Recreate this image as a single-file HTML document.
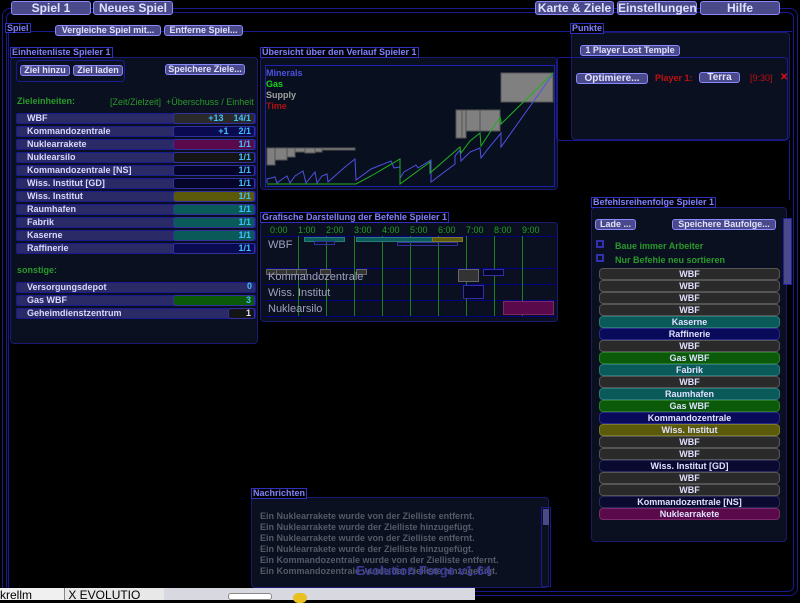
<!DOCTYPE html>
<html><head><meta charset="utf-8"><style>
*{margin:0;padding:0;box-sizing:border-box}
body{width:800px;height:600px;background:#000;position:relative;overflow:hidden;font-family:"Liberation Sans",sans-serif;font-weight:bold;font-size:9px;color:#d0d0ff}
.a{position:absolute}
.tab{position:absolute;height:14px;background:#4a4a8a;border:1px solid #8888ff;border-radius:3px;color:#e0e0ff;font-size:12px;text-align:center;line-height:12px}
.btn{position:absolute;height:11px;background:#4a4a8a;border:1px solid #8888ff;border-radius:3px;color:#e0e0ff;font-size:9px;text-align:center;line-height:9px;white-space:nowrap}
.lbl{position:absolute;height:11px;border:1px solid #3030c0;color:#8080ff;font-size:9px;line-height:9px;padding:0 1px;background:#000;white-space:nowrap}
.pan{position:absolute;background:#0a1020;border:1px solid #1a1a70;border-radius:4px}
.row{position:absolute;left:16px;width:240px;height:11px;background:#2a2a66;border:1px solid #1a1a90;border-radius:2px;font-size:9px;line-height:9px;padding-left:10px;color:#d8d8ff}
.v{position:absolute;right:0;top:-1px;height:11px;width:82px;border:1px solid #3030a0;border-radius:3px;text-align:right;padding-right:3px;color:#40c0ff;line-height:9px}
.it{position:absolute;left:599px;width:181px;height:12px;border:1px solid #555;border-radius:4px;text-align:center;font-size:9px;line-height:10px;color:#e0e0ff}
.g{background:#2a2a2a}.t{background:#0a5a5a;border-color:#2a7a7a}.n{background:#0a0a5a;border-color:#2a2a8a}.gr{background:#0a5a0a;border-color:#2a7a2a}.o{background:#5a5a0a;border-color:#7a7a2a}.d{background:#0a0a30;border-color:#2a2a5a}.p{background:#5a0a4a;border-color:#7a2a6a}
.msg{position:absolute;left:260px;color:#555a66;font-size:9px}
.tm{position:absolute;top:225px;color:#20a020;font-weight:normal;font-size:9px}
</style></head><body>
<div class="a" style="left:2px;top:8px;width:796px;height:588px;border:1px solid #1a1a90;border-radius:8px"></div>
<div class="a" style="left:6px;top:12px;width:788px;height:580px;border:1px solid #1a1a90;border-radius:6px"></div>
<div class="a" style="left:8px;top:31px;width:784px;height:560px;border-left:1px solid #1a1a90;border-top:1px solid #1a1a90"></div>
<div class="tab" style="left:11px;top:1px;width:80px">Spiel 1</div>
<div class="tab" style="left:93px;top:1px;width:80px">Neues Spiel</div>
<div class="tab" style="left:535px;top:1px;width:79px">Karte &amp; Ziele</div>
<div class="tab" style="left:617px;top:1px;width:80px">Einstellungen</div>
<div class="tab" style="left:700px;top:1px;width:80px">Hilfe</div>
<div class="lbl" style="left:5px;top:23px;height:10px">Spiel</div>
<div class="btn" style="left:55px;top:25px;width:106px">Vergleiche Spiel mit...</div>
<div class="btn" style="left:164px;top:25px;width:79px">Entferne Spiel...</div>

<div class="pan" style="left:10px;top:57px;width:248px;height:287px"></div>
<div class="lbl" style="left:10px;top:47px">Einheitenliste Spieler 1</div>
<div class="a" style="left:16px;top:60px;width:109px;height:22px;border:1px solid #1a1a90;border-radius:4px"></div>
<div class="btn" style="left:20px;top:65px;width:50px">Ziel hinzu</div>
<div class="btn" style="left:73px;top:65px;width:50px">Ziel laden</div>
<div class="btn" style="left:165px;top:64px;width:80px">Speichere Ziele...</div>
<div class="a" style="left:17px;top:96px;color:#2a9a2a">Zieleinheiten:</div>
<div class="a" style="left:110px;top:97px;color:#2a9a2a;font-weight:normal;width:148px;overflow:hidden;white-space:nowrap">[Zeit/Zielzeit]&nbsp; +Überschuss / Einheit</div>
<div class="row" style="top:113px">WBF<div class="v" style="background:#2a2a2a">+13 &nbsp;&nbsp; 14/1</div></div>
<div class="row" style="top:126px">Kommandozentrale<div class="v" style="background:#0a0a50">+1 &nbsp;&nbsp; 2/1</div></div>
<div class="row" style="top:139px">Nuklearrakete<div class="v" style="background:#5a0a4a">1/1</div></div>
<div class="row" style="top:152px">Nuklearsilo<div class="v" style="background:#151515">1/1</div></div>
<div class="row" style="top:165px">Kommandozentrale [NS]<div class="v" style="background:#05052a">1/1</div></div>
<div class="row" style="top:178px">Wiss. Institut [GD]<div class="v" style="background:#05052a">1/1</div></div>
<div class="row" style="top:191px">Wiss. Institut<div class="v" style="background:#5a5a0a">1/1</div></div>
<div class="row" style="top:204px">Raumhafen<div class="v" style="background:#0a5a5a">1/1</div></div>
<div class="row" style="top:217px">Fabrik<div class="v" style="background:#0a5a5a">1/1</div></div>
<div class="row" style="top:230px">Kaserne<div class="v" style="background:#0a5a5a">1/1</div></div>
<div class="row" style="top:243px">Raffinerie<div class="v" style="background:#0a0a50">1/1</div></div>
<div class="a" style="left:17px;top:265px;color:#2a9a2a">sonstige:</div>
<div class="row" style="top:282px">Versorgungsdepot<div class="v" style="border:none;background:none">0</div></div>
<div class="row" style="top:295px">Gas WBF<div class="v" style="background:#0a5a0a">3</div></div>
<div class="row" style="top:308px">Geheimdienstzentrum<div class="v" style="background:#151515;width:27px;color:#e0e0ff">1</div></div>

<div class="pan" style="left:260px;top:57px;width:298px;height:133px"></div>
<div class="lbl" style="left:260px;top:47px">Übersicht über den Verlauf Spieler 1</div>
<svg class="a" style="left:0;top:0" width="800" height="600" viewBox="0 0 800 600">
<rect x="265.5" y="65.5" width="289" height="121" fill="#081020" stroke="#2020b0"/>
<g fill="#808080" stroke="#555">
<rect x="267" y="148" width="8" height="17"/><rect x="275" y="148" width="12" height="12"/><rect x="287" y="148" width="8" height="9"/><rect x="295" y="148" width="10" height="4"/><rect x="305" y="148" width="10" height="5"/><rect x="315" y="148" width="7" height="4"/><rect x="322" y="148" width="33" height="2"/>
<rect x="456" y="110" width="6" height="28"/><rect x="462" y="110" width="4" height="28"/><rect x="466" y="110" width="14" height="21"/><rect x="480" y="110" width="20" height="21"/><rect x="501" y="73" width="52" height="29"/></g>
<polyline fill="none" stroke="#5050e0" stroke-width="1" points="267,183 267,179 275,177 277,183 281,180 287,176 290,183 295,176 303,171 306,183 310,178 315,172 317,183 322,176 327,174 328,182 345,167 355,159 356,180 371,169 391,161 394,168 400,167 400,178 404,172 416,165 418,168 431,160 431,182 455,164 455,156 460,150 461,161 470,152 480,148 481,158 487,150 501,133 501,147 553,74"/>
<polyline fill="none" stroke="#20b020" stroke-width="1" points="267,184 328,184 345,184 356,184 371,176 400,159 400,184 430,162 430,173 460,147 461,153 470,141 480,133 481,146 500,117 501,121 501,124 553,73"/>
</svg>
<div class="a" style="left:266px;top:68px;color:#5050e0">Minerals</div>
<div class="a" style="left:266px;top:79px;color:#20d020">Gas</div>
<div class="a" style="left:266px;top:90px;color:#a0a0a0">Supply</div>
<div class="a" style="left:266px;top:101px;color:#b01010">Time</div>

<div class="pan" style="left:571px;top:32px;width:219px;height:108px"></div>
<div class="lbl" style="left:570px;top:23px">Punkte</div>
<div class="btn" style="left:580px;top:45px;width:100px">1 Player Lost Temple</div>
<div class="a" style="left:556px;top:57px;width:232px;height:84px;border:1px solid #1a1a90;border-radius:4px"></div>
<div class="btn" style="left:576px;top:73px;width:72px;font-size:10px">Optimiere...</div>
<div class="a" style="left:655px;top:73px;color:#c01010">Player 1:</div>
<div class="btn" style="left:699px;top:72px;width:41px;font-size:10px">Terra</div>
<div class="a" style="left:750px;top:73px;color:#c01010;font-weight:normal">[9:30]</div>
<div class="a" style="left:780px;top:72px;color:#e01010;font-size:10px">✕</div>

<div class="pan" style="left:260px;top:222px;width:298px;height:100px"></div>
<div class="lbl" style="left:260px;top:212px">Grafische Darstellung der Befehle Spieler 1</div>
<svg class="a" style="left:0;top:0" width="800" height="600">
<g stroke="#000080"><line x1="265" y1="236.5" x2="556" y2="236.5"/><line x1="265" y1="268.5" x2="556" y2="268.5"/><line x1="265" y1="284.5" x2="556" y2="284.5"/><line x1="265" y1="300.5" x2="556" y2="300.5"/><line x1="265" y1="316.5" x2="556" y2="316.5"/></g>
<g stroke="#208020"><line x1="298.5" y1="236" x2="298.5" y2="316"/><line x1="326.5" y1="236" x2="326.5" y2="316"/><line x1="354.5" y1="236" x2="354.5" y2="316"/><line x1="382.5" y1="236" x2="382.5" y2="316"/><line x1="410.5" y1="236" x2="410.5" y2="316"/><line x1="438.5" y1="236" x2="438.5" y2="316"/><line x1="466.5" y1="236" x2="466.5" y2="316"/><line x1="494.5" y1="236" x2="494.5" y2="316"/><line x1="522.5" y1="236" x2="522.5" y2="316"/></g>
<rect x="304.5" y="237.5" width="40" height="4" fill="#0a5a5a" stroke="#2a7a7a"/>
<rect x="356.5" y="237.5" width="76" height="4" fill="#0a5a5a" stroke="#2a7a7a"/>
<rect x="432.5" y="237.5" width="30" height="4" fill="#5a5a0a" stroke="#7a7a2a"/>
<rect x="314.5" y="241.5" width="20" height="3" fill="none" stroke="#3030a0"/>
<rect x="397.5" y="242.5" width="60" height="3" fill="none" stroke="#3030a0"/>
<g fill="#333" stroke="#666"><rect x="266.5" y="269.5" width="10" height="5"/><rect x="276.5" y="269.5" width="10" height="5"/><rect x="286.5" y="269.5" width="10" height="5"/><rect x="296.5" y="269.5" width="10" height="5"/><rect x="320.5" y="269.5" width="10" height="5"/><rect x="356.5" y="269.5" width="10" height="5"/><rect x="458.5" y="269.5" width="20" height="12"/></g>
<rect x="483.5" y="269.5" width="20" height="6" fill="#05052a" stroke="#3030a0"/>
<rect x="463.5" y="285.5" width="20" height="13" fill="#05052a" stroke="#3030a0"/>
<rect x="503.5" y="301.5" width="50" height="13" fill="#5a0a4a" stroke="#7a2a6a"/>
</svg>
<div class="tm" style="left:270px">0:00</div>
<div class="tm" style="left:298px">1:00</div>
<div class="tm" style="left:326px">2:00</div>
<div class="tm" style="left:354px">3:00</div>
<div class="tm" style="left:382px">4:00</div>
<div class="tm" style="left:410px">5:00</div>
<div class="tm" style="left:438px">6:00</div>
<div class="tm" style="left:466px">7:00</div>
<div class="tm" style="left:494px">8:00</div>
<div class="tm" style="left:522px">9:00</div>
<div class="a" style="left:268px;top:239px;color:#a0a0c0;font-weight:normal;font-size:11px">WBF</div>
<div class="a" style="left:268px;top:271px;color:#a0a0c0;font-weight:normal;font-size:11px">Kommandozentrale</div>
<div class="a" style="left:268px;top:287px;color:#a0a0c0;font-weight:normal;font-size:11px">Wiss. Institut</div>
<div class="a" style="left:268px;top:303px;color:#a0a0c0;font-weight:normal;font-size:11px">Nuklearsilo</div>

<div class="a" style="left:570px;top:140px;width:220px;height:60px;border-right:1px solid #1a1a90"></div>
<div class="pan" style="left:591px;top:207px;width:196px;height:335px"></div>
<div class="lbl" style="left:591px;top:197px">Befehlsreihenfolge Spieler 1</div>
<div class="btn" style="left:595px;top:219px;width:41px">Lade ...</div>
<div class="btn" style="left:672px;top:219px;width:104px">Speichere Baufolge...</div>
<div class="a" style="left:783px;top:218px;width:9px;height:67px;background:#4a4a8a;border:1px solid #2020a0"></div>
<div class="a" style="left:596px;top:240px;width:8px;height:8px;border:2px solid #3030b0"></div>
<div class="a" style="left:596px;top:254px;width:8px;height:8px;border:2px solid #3030b0"></div>
<div class="a" style="left:615px;top:241px;color:#2a9a2a">Baue immer Arbeiter</div>
<div class="a" style="left:615px;top:255px;color:#2a9a2a">Nur Befehle neu sortieren</div>
<div class="it g" style="top:268px">WBF</div>
<div class="it g" style="top:280px">WBF</div>
<div class="it g" style="top:292px">WBF</div>
<div class="it g" style="top:304px">WBF</div>
<div class="it t" style="top:316px">Kaserne</div>
<div class="it n" style="top:328px">Raffinerie</div>
<div class="it g" style="top:340px">WBF</div>
<div class="it gr" style="top:352px">Gas WBF</div>
<div class="it t" style="top:364px">Fabrik</div>
<div class="it g" style="top:376px">WBF</div>
<div class="it t" style="top:388px">Raumhafen</div>
<div class="it gr" style="top:400px">Gas WBF</div>
<div class="it n" style="top:412px">Kommandozentrale</div>
<div class="it o" style="top:424px">Wiss. Institut</div>
<div class="it g" style="top:436px">WBF</div>
<div class="it g" style="top:448px">WBF</div>
<div class="it d" style="top:460px">Wiss. Institut [GD]</div>
<div class="it g" style="top:472px">WBF</div>
<div class="it g" style="top:484px">WBF</div>
<div class="it d" style="top:496px">Kommandozentrale [NS]</div>
<div class="it p" style="top:508px">Nuklearrakete</div>

<div class="pan" style="left:251px;top:497px;width:298px;height:91px"></div>
<div class="lbl" style="left:251px;top:488px">Nachrichten</div>
<div class="a" style="left:543px;top:509px;width:6px;height:16px;background:#4a4a8a"></div>
<div class="a" style="left:541px;top:507px;width:10px;height:80px;border:1px solid #1a1a90"></div>
<div class="msg" style="top:511px">Ein Nuklearrakete wurde von der Zielliste entfernt.</div>
<div class="msg" style="top:522px">Ein Nuklearrakete wurde der Zielliste hinzugefügt.</div>
<div class="msg" style="top:533px">Ein Nuklearrakete wurde von der Zielliste entfernt.</div>
<div class="msg" style="top:544px">Ein Nuklearrakete wurde der Zielliste hinzugefügt.</div>
<div class="msg" style="top:555px">Ein Kommandozentrale wurde von der Zielliste entfernt.</div>
<div class="msg" style="top:566px">Ein Kommandozentrale wurde der Zielliste hinzugefügt.</div>
<div class="a" style="left:356px;top:563px;color:#3a3a9a;font-size:13px">Evolution Forge v1.64</div>

<div class="a" style="left:0;top:588px;width:475px;height:12px;background:#d8d8e0"></div>
<div class="a" style="left:0;top:588px;width:64px;height:12px;background:#f0f0f0;color:#000;font-weight:normal;font-size:12px;line-height:14px;overflow:hidden">krellm</div>
<div class="a" style="left:64px;top:588px;width:100px;height:12px;background:#e8e8e8;color:#000;font-weight:normal;font-size:12px;line-height:14px;overflow:hidden;border-left:1px solid #888">&nbsp;X EVOLUTIO</div>
<div class="a" style="left:228px;top:593px;width:44px;height:7px;border:1px solid #888;border-radius:3px;background:#fff"></div>
<div class="a" style="left:293px;top:593px;width:14px;height:10px;border-radius:7px;background:#e8c020"></div>
</body></html>
